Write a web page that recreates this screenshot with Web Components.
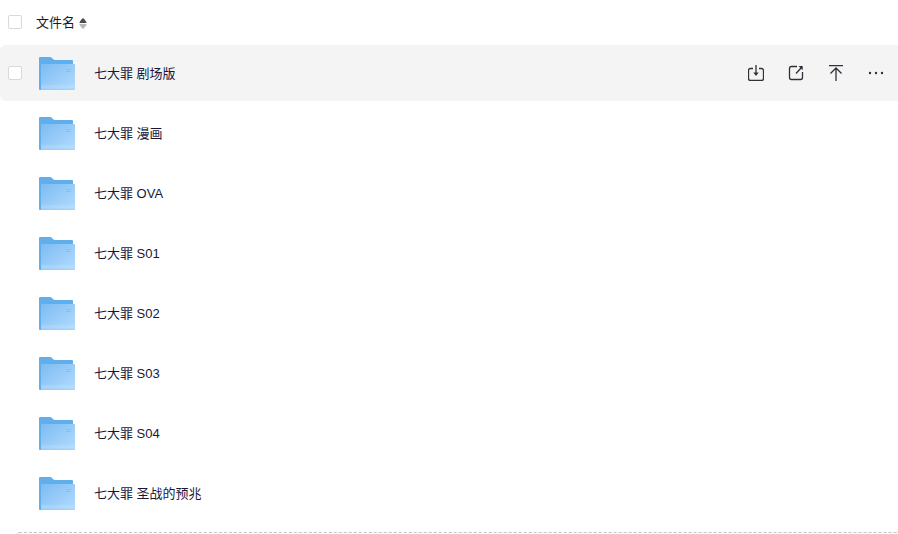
<!DOCTYPE html>
<html lang="zh-CN">
<head>
<meta charset="utf-8">
<title>文件名</title>
<style>
html,body{margin:0;height:100%;background:#fff}
body{font:13px/20px "Liberation Sans","Noto Sans CJK SC",sans-serif;color:#1a1a1a;overflow:hidden}
</style>
</head>
<body>
<file-browser></file-browser>
<script>
const define = (name, html, setup) => {
  const template = document.createElement('template');
  template.innerHTML = html;
  customElements.define(name, class extends HTMLElement {
    constructor() {
      super();
      this.attachShadow({mode: 'open'}).append(template.content.cloneNode(true));
    }
    connectedCallback() { if (setup) setup(this, this.shadowRoot); }
  });
};

define('check-box', `
<style>
:host{display:flex;flex:none}
input{appearance:none;box-sizing:border-box;width:14px;height:14px;margin:0;border:1px solid #d9d9dc;border-radius:2px;background:#fff}
input:checked{background:#06a7ff;border-color:#06a7ff}
</style>
<input type="checkbox">`, (host, root) => {
  root.querySelector('input').setAttribute('aria-label', host.getAttribute('label'));
});

define('folder-icon', `
<style>:host{display:block;flex:none}svg{display:block}</style>
<svg width="36" height="34" viewBox="0 0 36 34" aria-hidden="true">
<defs>
<linearGradient id="f" x1="0" y1="0" x2="1" y2="1"><stop offset="0" stop-color="#7dbcf1"/><stop offset="1" stop-color="#b3dbff"/></linearGradient>
<linearGradient id="s" x1="0" y1="0" x2="0" y2="1"><stop offset="0" stop-color="#c5e4ff" stop-opacity="0"/><stop offset=".5" stop-color="#c5e4ff" stop-opacity=".4"/><stop offset="1" stop-color="#8ec7f8" stop-opacity=".5"/></linearGradient>
</defs>
<path fill="#61aeec" d="M1 0H11Q12 0 13 1L14 2Q15 3 16 3H33Q34 3 34 4V33H1Q0 33 0 32V1Q0 0 1 0Z"/>
<path fill="url(#f)" d="M2 7H35Q36 7 36 8V32Q36 33 35 33H2Z"/>
<path fill="url(#s)" d="M2 27H36V32Q36 33 35 33H2Z"/>
<path stroke="#88bff0" d="M27 12.5H32M27 14.5H32"/>
</svg>`);

const icons = {
  download: '<path d="M5 3.5H2.5Q.5 3.5 .5 5.5V13.5Q.5 15.5 2.5 15.5H13.5Q15.5 15.5 15.5 13.5V5.5Q15.5 3.5 13.5 3.5H11M8 0V9"/><path fill="currentColor" stroke="none" d="M5.3 7.5H10.7L8 11Z"/>',
  share: '<path d="M9 1.5H3.5Q1.5 1.5 1.5 3.5V12.5Q1.5 14.5 3.5 14.5H12.5Q14.5 14.5 14.5 12.5V7M8 8.5L13.5 2.5"/><path fill="currentColor" stroke="none" d="M10.5 1H14.7V5.2Z"/>',
  top: '<path d="M1 .5H15M8 16V3.5M2.5 8.5L8 3L13.5 8.5"/>',
  more: '<g fill="currentColor" stroke="none"><circle cx="2" cy="8" r="1.2"/><circle cx="8" cy="8" r="1.2"/><circle cx="14" cy="8" r="1.2"/></g>'
};
define('icon-button', `
<style>
:host{display:block}
button{display:grid;place-items:center;width:24px;height:24px;padding:0;border:0;background:none;color:#303038}
svg{display:block;fill:none;stroke:currentColor;stroke-width:1.3}
</style>
<button type="button"><svg width="16" height="16" viewBox="0 0 16 16" aria-hidden="true"></svg></button>`, (host, root) => {
  root.querySelector('svg').innerHTML = icons[host.getAttribute('icon')];
  root.querySelector('button').setAttribute('aria-label', host.getAttribute('label'));
});

define('list-header', `
<style>
:host{display:flex;align-items:center;height:44px;padding:0 8px 1px;gap:14px}
button{display:flex;align-items:center;gap:4px;padding:2px 0 0;border:0;background:none;font:inherit;color:inherit}
svg{display:block}
</style>
<check-box label="全选"></check-box>
<button type="button"><slot></slot><svg width="8" height="11" viewBox="0 0 8 11" aria-hidden="true"><path fill="#4c4c50" d="M1 5Q0 5 .6 4L2.8 1Q4 -.5 5.2 1L7.4 4Q8 5 7 5Z"/><path fill="#b8b8bb" d="M1 6Q0 6 .6 7L2.8 10Q4 11.5 5.2 10L7.4 7Q8 6 7 6Z"/></svg></button>`);

define('file-row', `
<style>
:host{display:flex;align-items:center;height:56px;padding:0 10px 0 8px;border-radius:6px 0 0 6px}
:host([active]){background:#f4f4f4}
check-box{visibility:hidden}
:host([active]) check-box{visibility:visible}
folder-icon{margin:0 19px 0 17px;padding-top:2px}
a{padding-top:2px;color:#18183a;text-decoration:none;white-space:nowrap}
.actions{display:none;gap:16px;margin-left:auto}
:host([active]) .actions{display:flex}
</style>
<check-box label="选择文件"></check-box>
<folder-icon></folder-icon>
<a href="#"><slot></slot></a>
<div class="actions">
<icon-button icon="download" label="下载"></icon-button>
<icon-button icon="share" label="分享"></icon-button>
<icon-button icon="top" label="置顶"></icon-button>
<icon-button icon="more" label="更多"></icon-button>
</div>`);

define('file-browser', `
<style>
:host{display:flex;flex-direction:column;height:100vh;overflow:hidden}
main{display:grid;flex:none;gap:4px}
.drop{flex:1;margin:11px 0 0 17px;border:1px dashed #c4c4c4;border-width:1px 0 0 1px;border-radius:4px 0 0}
</style>
<list-header>文件名</list-header>
<main>
<file-row active>七大罪 剧场版</file-row>
<file-row>七大罪 漫画</file-row>
<file-row>七大罪 OVA</file-row>
<file-row>七大罪 S01</file-row>
<file-row>七大罪 S02</file-row>
<file-row>七大罪 S03</file-row>
<file-row>七大罪 S04</file-row>
<file-row>七大罪 圣战的预兆</file-row>
</main>
<div class="drop"></div>`);
</script>
</body>
</html>
